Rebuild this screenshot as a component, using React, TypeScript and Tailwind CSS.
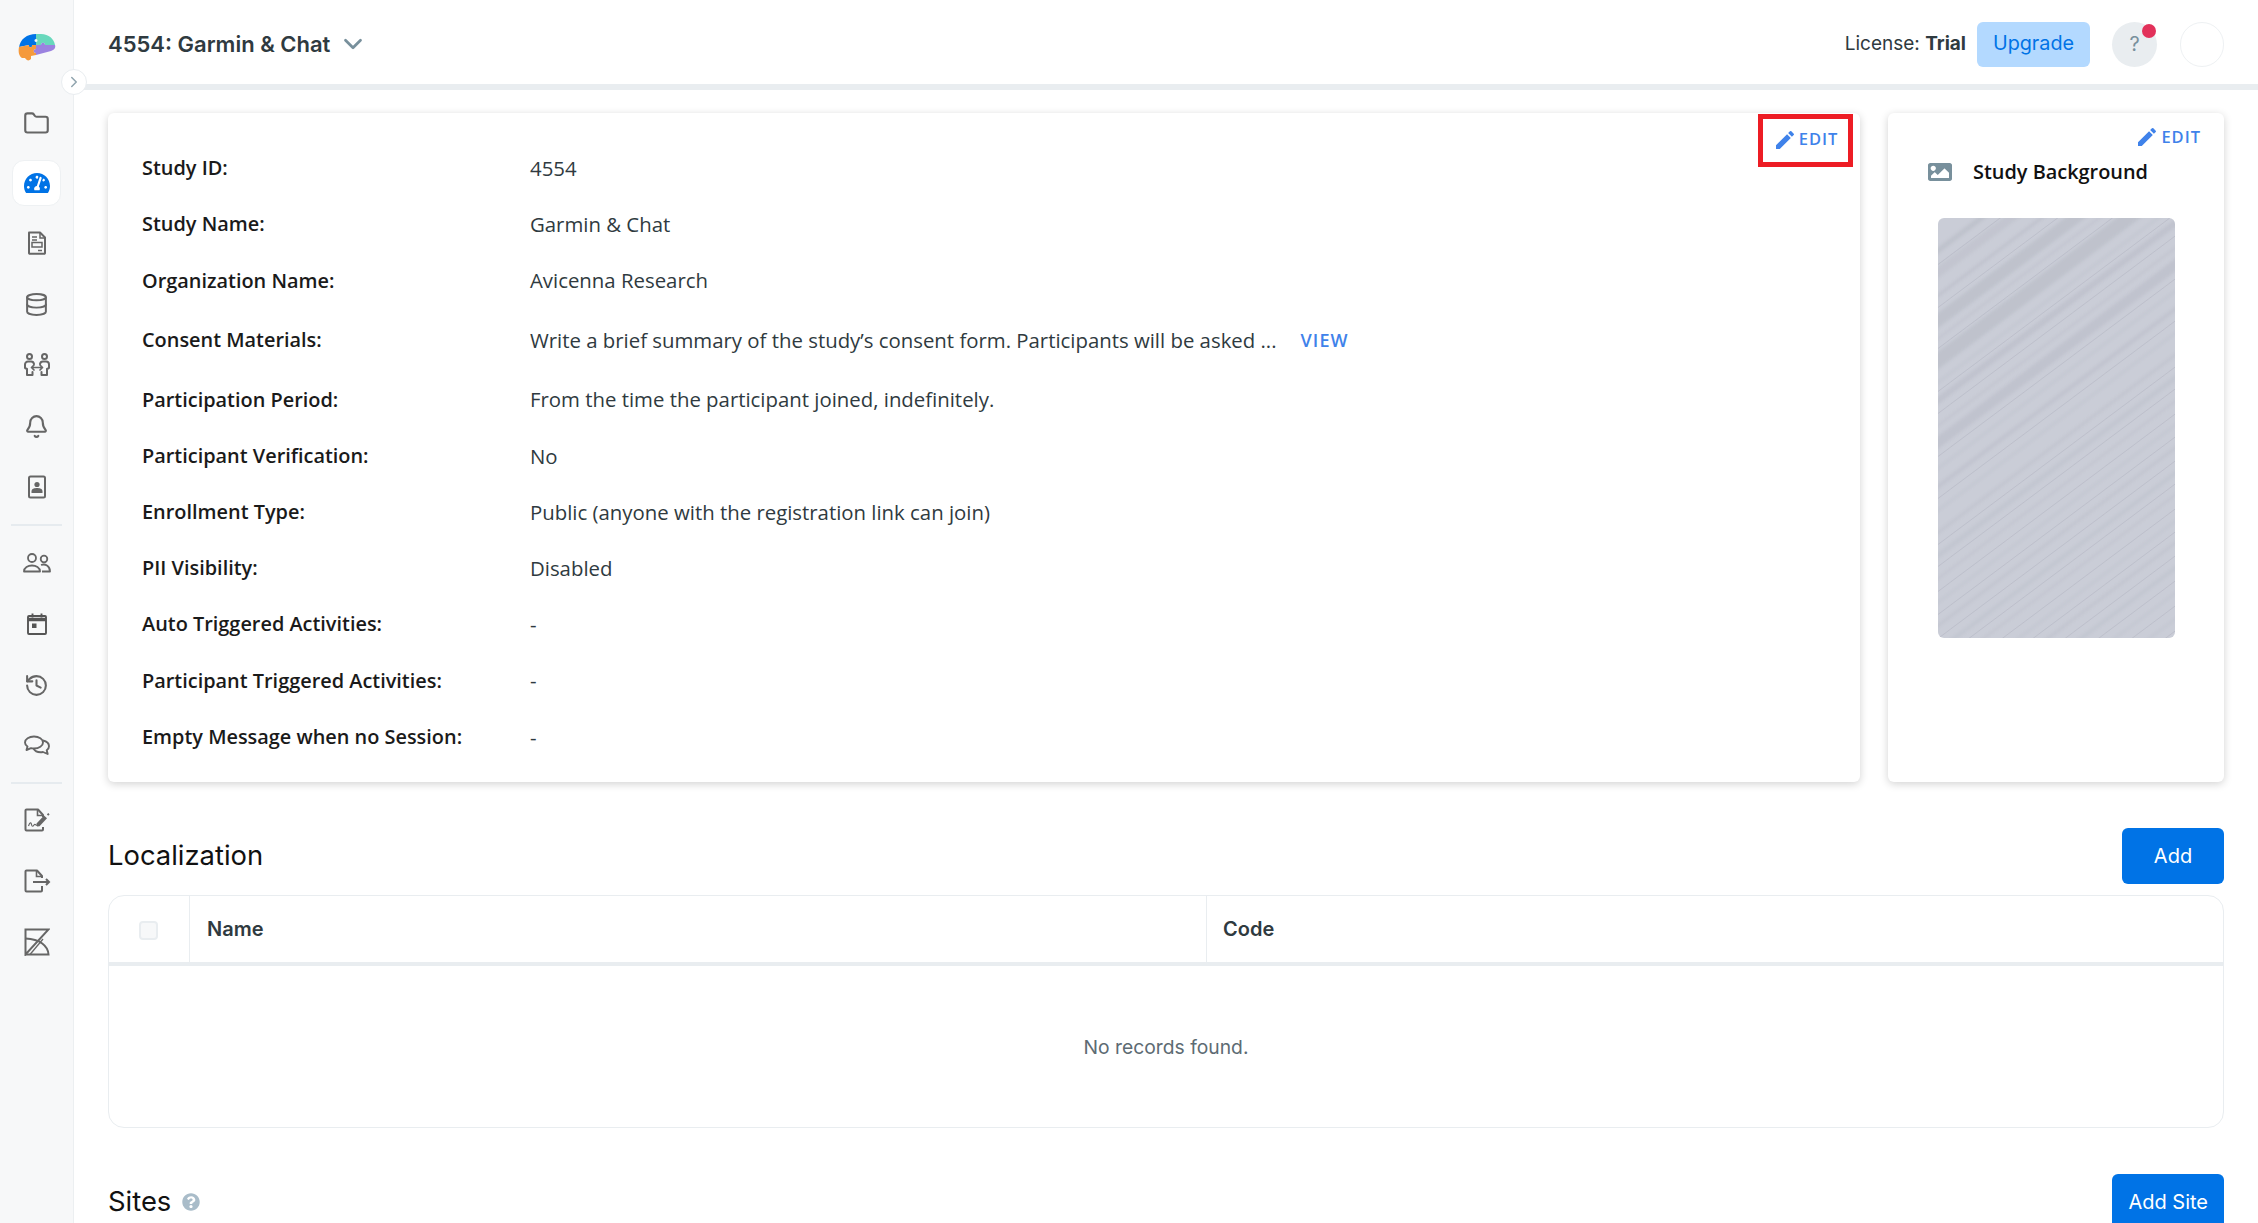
import React from "react";
import { Bell, ChevronDown, ChevronRight, Database, Folder, History } from "lucide-react";
import { FaImage, FaQuestionCircle, FaTachometerAlt } from "react-icons/fa";
import { MdEdit } from "react-icons/md";

const Logo = () => (
  <svg width="38" height="28" viewBox="0 0 38 28">
    <path d="M1 15 C2 6 9 1 18 1 L18 6 C16 6 16 9 18 9 L18 12 L14 12 C15 15 10 15 11 12 L1 14 Z" fill="#0073e6" />
    <path d="M18 1 L23 1 C31 1 36 6 37 12 L27 12 C27 9 23 9 23 12 L18 12 L18 9 C20 9 20 6 18 6 Z" fill="#68d8bc" />
    <path d="M1 14 L11 12 C10 15 15 15 14 12 L18 12 L18 16 C15 16 15 20 18 20 L18 22 L13 23 L13 26 C11 28 9 28 7 25 L4 25 C1 23 0 19 1 14 Z" fill="#f59a3c" />
    <path d="M18 12 L23 12 C23 9 27 9 27 12 L37 12 C38 15 36 17 33 18 L18 22 L18 20 C15 20 15 16 18 16 Z" fill="#9b82e0" />
  </svg>
);

const DocIcon = () => (
  <svg width="24" height="24" viewBox="0 0 24 24" fill="none" stroke="#666" strokeWidth="2">
    <path d="M4 1.500h11l5 5V22a.8.8 0 0 1-.8.8H4.800A.8.8 0 0 1 4 22V2.300a.8.8 0 0 1 .8-.8Z" strokeLinejoin="round" />
    <path d="M7 6h5M7 9h5M15 2v5h5" strokeWidth="1.500" />
    <rect x="7" y="11.500" width="10" height="4.500" strokeWidth="1.500" />
    <path d="M13 19.500h4" strokeWidth="1.500" />
  </svg>
);

const ExchangeIcon = () => (
  <svg width="28" height="24" viewBox="0 0 28 24" fill="none" stroke="#666" strokeWidth="2" strokeLinecap="round" strokeLinejoin="round">
    <circle cx="6.500" cy="3.500" r="2.500" />
    <circle cx="21.500" cy="3.500" r="2.500" />
    <path d="M6 22h3.500v-3M2 15v-3.500A3 3 0 0 1 5 8.500h3a3 3 0 0 1 3 2.500M2 15l2 1v6h2" />
    <path d="M22 22h-3.500v-3M26 15v-3.500a3 3 0 0 0-3-3h-3a3 3 0 0 0-3 2.500M26 15l-2 1v6h-2" />
    <path d="M8.500 14.500h11M11 12 8.500 14.500 11 17M17 12l2.500 2.500L17 17" strokeWidth="1.700" />
  </svg>
);

const ContactIcon = () => (
  <svg width="24" height="24" viewBox="0 0 24 24" fill="none" stroke="#666" strokeWidth="2">
    <rect x="4" y="1.500" width="16" height="21" rx="1.500" />
    <circle cx="12" cy="9.500" r="2.600" fill="#666" stroke="none" />
    <path d="M6.500 18v-1.500c0-3 3-3.500 5.500-3.500s5.500.5 5.500 3.500V18Z" fill="#666" stroke="none" />
  </svg>
);

const UsersIcon = () => (
  <svg width="30" height="24" viewBox="0 0 30 24" fill="none" stroke="#666" strokeWidth="1.800">
    <circle cx="10" cy="7" r="4" />
    <path d="M2 20.500c0-8 16-8 16 0Z" strokeLinejoin="round" />
    <circle cx="22" cy="8" r="3.300" />
    <path d="M19 14c4-1.500 9 .5 9 6.500h-8" strokeLinejoin="round" />
  </svg>
);

const CalendarIcon = () => (
  <svg width="24" height="24" viewBox="0 0 24 24" fill="none" stroke="#555" strokeWidth="1.900">
    <rect x="3" y="4" width="18" height="18" rx="1" />
    <path d="M3 7.500h18" strokeWidth="3.500" />
    <path d="M7.500 1.500v4M16.500 1.500v4" />
    <rect x="7" y="11.500" width="4.500" height="4.500" fill="#555" stroke="none" />
  </svg>
);

const ChatsIcon = () => (
  <svg width="28" height="24" viewBox="0 0 28 24" fill="none" stroke="#666" strokeWidth="1.900" strokeLinejoin="round">
    <path d="M11 2.500c5 0 9 2.500 9 6s-4 6-9 6c-1 0-2 0-3-.3L3.500 16l1-3.500C2.800 11.500 2 10 2 8.500c0-3.500 4-6 9-6Z" />
    <path d="M20 6.500c3.500.8 6 3 6 5.700 0 1.600-.8 3-2.300 4l1 3.800-4.700-2c-4 .6-8-.7-9.500-3.500" />
  </svg>
);

const FileSignIcon = () => (
  <svg width="28" height="24" viewBox="0 0 28 24" fill="none" stroke="#666" strokeWidth="2">
    <path d="M20 9V7l-5-5.500H3.500a1 1 0 0 0-1 1V21.500a1 1 0 0 0 1 1H19a1 1 0 0 0 1-1V19" strokeLinejoin="round" />
    <path d="M14.500 2v5.500H20" strokeWidth="1.600" />
    <path d="M5.500 18c1.500-4 2.500-4 3-1.500s1.500 2 2.500.5 1.500 0 3 .5" strokeWidth="1.200" />
    <path d="M14 18.500l-.5-3L21 7.500l3 2.800-7.500 8Z" fill="#666" stroke="none" />
    <path d="M24.500 7l1.500-1.200" strokeWidth="2" />
  </svg>
);

const FileExportIcon = () => (
  <svg width="28" height="24" viewBox="0 0 28 24" fill="none" stroke="#666" strokeWidth="2">
    <path d="M19 9V7l-5-5.500H3.500a1 1 0 0 0-1 1V21.500a1 1 0 0 0 1 1H18a1 1 0 0 0 1-1V17" strokeLinejoin="round" />
    <path d="M13.500 2v5.500H19" strokeWidth="1.600" />
    <path d="M10 13h16M23 10l3 3-3 3" />
  </svg>
);

const ChartIcon = () => (
  <svg width="26" height="28" viewBox="0 0 26 28" fill="none" stroke="#666" strokeWidth="2">
    <path d="M1.500 1.500h23L1.500 26.500Z" />
    <path d="M1.500 26.500h23C24 18 16 11 1.500 10.500" />
    <path d="M6 26.500 19 11" strokeWidth="1.300" />
  </svg>
);

const navClass = "h-12 flex items-center justify-center";
const rule = "h-0.5 mx-[11px] bg-[#e6ebef]";

const Sidebar = () => (
  <aside className="w-[74px] h-full shrink-0 bg-[#f7f8f9] border-r border-[#eceff1] pt-[33px] flex flex-col">
    <div className="h-7 flex justify-center"><Logo /></div>
    <div className="mt-[38px] flex flex-col gap-[13px]">
      <div className={`${navClass} text-[#666]`}><Folder size={27} strokeWidth={1.9} /></div>
      <div className="h-[46px] mx-3 bg-white rounded-xl border border-[#eef1f3] flex items-center justify-center">
        <FaTachometerAlt size={26} color="#0073e6" />
      </div>
      <div className={navClass}><DocIcon /></div>
      <div className={`${navClass} text-[#666]`}><Database size={25} strokeWidth={1.9} /></div>
      <div className={navClass}><ExchangeIcon /></div>
      <div className={`${navClass} text-[#666]`}><Bell size={25} strokeWidth={2} /></div>
      <div className={navClass}><ContactIcon /></div>
      <div className={rule} />
      <div className={navClass}><UsersIcon /></div>
      <div className={navClass}><CalendarIcon /></div>
      <div className={`${navClass} text-[#666]`}><History size={25} strokeWidth={2} /></div>
      <div className={navClass}><ChatsIcon /></div>
      <div className={`${rule} -my-px`} />
      <div className={navClass}><FileSignIcon /></div>
      <div className={navClass}><FileExportIcon /></div>
      <div className={navClass}><ChartIcon /></div>
    </div>
  </aside>
);

const Header = () => (
  <header className="h-[90px] shrink-0 border-b-[6px] border-[#e9edf0] pl-[34px] pr-[34px] pt-1 flex items-center justify-between font-['Inter',sans-serif]">
    <div className="flex items-center gap-2 text-[#2f3a40]">
      <span className="text-[22px] font-semibold">4554: Garmin &amp; Chat</span>
      <ChevronDown size={30} color="#78909c" strokeWidth={2.2} />
    </div>
    <div className="flex items-center">
      <span className="text-[19px] text-[#2f3a40]">License: <b className="font-bold">Trial</b></span>
      <button className="ml-[11px] h-[45px] w-[113px] rounded-md bg-[#b3d9ff] text-[#0073e6] text-[19.800px]">Upgrade</button>
      <div className="relative ml-[22px] w-[45px] h-[45px] rounded-full bg-[#e9edf0] text-[#78909c] text-[20px] flex items-center justify-center">
        ?
        <span className="absolute top-[2px] right-[1px] w-3.5 h-3.5 rounded-full bg-[#e2315a]" />
      </div>
      <div className="ml-[23px] w-[44px] h-[45px] rounded-full border border-[#eef1f3] bg-white" />
    </div>
  </header>
);

const EditLink = () => (
  <span className="flex items-center gap-1 text-[#3f82ea] text-[16.500px] font-semibold tracking-[0.06em] leading-none -mt-0.5">
    <MdEdit size={24} className="-mr-0.5" />
    EDIT
  </span>
);

const rows: { label: string; value: string; tall?: boolean }[] = [
  { label: "Study ID:", value: "4554" },
  { label: "Study Name:", value: "Garmin & Chat" },
  { label: "Organization Name:", value: "Avicenna Research" },
  { label: "Consent Materials:", value: "Write a brief summary of the study’s consent form. Participants will be asked ...", tall: true },
  { label: "Participation Period:", value: "From the time the participant joined, indefinitely." },
  { label: "Participant Verification:", value: "No" },
  { label: "Enrollment Type:", value: "Public (anyone with the registration link can join)" },
  { label: "PII Visibility:", value: "Disabled" },
  { label: "Auto Triggered Activities:", value: "-" },
  { label: "Participant Triggered Activities:", value: "-" },
  { label: "Empty Message when no Session:", value: "-" },
];

const DetailsCard = () => (
  <section className="flex-1 flex justify-between rounded-md bg-white shadow-[0_2px_8px_rgba(0,0,0,0.18)] pt-[27px] pb-[17px] pl-[34px] pr-[7px] font-['Open_Sans',sans-serif]">
    <div>
      {rows.map((row) => (
        <div key={row.label} className={`flex items-center ${row.tall ? "h-[63px]" : "h-[56.200px]"}`}>
          <span className="w-[388px] text-[19.900px] font-semibold text-[#1a1a1a]">{row.label}</span>
          <span className="text-[20.360px] text-[#2f3a40]">{row.value}</span>
          {row.tall && <span className="ml-6 text-[18px] font-semibold tracking-[0.06em] text-[#3f82ea]">VIEW</span>}
        </div>
      ))}
    </div>
    <div className="-mt-[26px] h-[53px] w-[95px] border-[5px] border-[#ed1c24] flex items-center justify-center">
      <EditLink />
    </div>
  </section>
);

const streaks = [
  [40, 0.09, 5], [62, 0.06, 9], [85, 0.08, 3], [110, 0.09, 12], [128, 0.06, 2], [150, 0.09, 14], [172, 0.05, 2],
  [190, 0.08, 6], [215, 0.06, 2], [232, 0.08, 10], [258, 0.05, 2], [276, 0.07, 4], [300, 0.05, 2], [322, 0.06, 3],
  [345, 0.05, 5], [368, 0.06, 2], [392, 0.05, 2], [415, 0.06, 3], [440, 0.05, 4], [462, 0.06, 2], [488, 0.05, 2],
  [510, 0.06, 3], [535, 0.05, 4], [560, 0.05, 2], [586, 0.05, 2], [610, 0.05, 3], [640, 0.05, 3],
];

// thin hairlines between the wider streaks
const hairlines = [54, 97, 138, 181, 203, 246, 288, 334, 356, 381, 404, 428, 451, 476, 499, 523, 548, 573, 598, 625];

const StudyImage = () => (
  <svg width="237" height="420" viewBox="0 0 237 420" className="mx-auto mt-[31px] rounded-md bg-[#cacdd7]">
    <g className="blur-[1.500px]">
      {streaks.map(([y, opacity, width]) => (
        <line key={y} x1="-10" y1={y} x2="300" y2={y - 232} stroke="#6f7380" strokeOpacity={opacity * 1.3} strokeWidth={width} />
      ))}
    </g>
    <g className="blur-[0.5px]">
      {hairlines.map((y) => (
        <line key={y} x1="-10" y1={y} x2="300" y2={y - 232} stroke="#7b7f8c" strokeOpacity={0.16} strokeWidth={1} />
      ))}
    </g>
  </svg>
);

const BackgroundCard = () => (
  <section className="w-[336px] shrink-0 rounded-md bg-white shadow-[0_2px_8px_rgba(0,0,0,0.18)] pt-[14px] font-['Open_Sans',sans-serif]">
    <div className="flex justify-end pr-[23px]"><EditLink /></div>
    <div className="mt-2 pl-10 flex items-center gap-[21px] text-[19.900px] font-semibold text-[#111]">
      <FaImage size={24} color="#78909c" />
      Study Background
    </div>
    <StudyImage />
  </section>
);

const SectionHead = ({ title, action, help }: { title: string; action: string; help?: boolean }) => (
  <div className="mt-[46px] flex items-center justify-between font-['Inter',sans-serif]">
    <h2 className="flex items-center gap-[11px] text-[27.400px] text-[#111]">
      {title}
      {help && <FaQuestionCircle size={18} color="#a9bcc9" />}
    </h2>
    <button className="h-14 min-w-[102px] px-4 rounded-md bg-[#0073e6] text-white text-[20px]">{action}</button>
  </div>
);

const LocalizationTable = () => (
  <div className="mt-[11px] h-[233px] rounded-2xl border border-[#e9edf0] font-['Inter',sans-serif] text-[#2f3a40]">
    <div className="h-[70px] flex border-b-4 border-[#e9edf0] text-[20px] font-semibold">
      <div className="w-[81px] flex items-center justify-center border-r border-[#e9edf0]">
        <span className="w-[19px] h-[19px] mt-1 -ml-0.5 rounded-[4px] border-2 border-[#e9edf0] bg-[#f7f8f9]" />
      </div>
      <div className="w-[1017px] pl-[17px] flex items-center border-r border-[#e9edf0]">Name</div>
      <div className="flex-1 pl-4 flex items-center">Code</div>
    </div>
    <div className="h-[159px] pt-[5px] flex items-center justify-center text-[19.300px] text-[#5d6b73]">No records found.</div>
  </div>
);

export default function App() {
  return (
    <div className="relative flex h-screen overflow-hidden bg-white">
      <Sidebar />
      <div className="flex-1 min-w-0 flex flex-col">
        <Header />
        <main className="px-[34px] pt-[23px]">
          <div className="flex gap-7">
            <DetailsCard />
            <BackgroundCard />
          </div>
          <SectionHead title="Localization" action="Add" />
          <LocalizationTable />
          <SectionHead title="Sites" action="Add Site" help />
        </main>
      </div>
      <button className="absolute left-[61px] top-[69px] w-[26px] h-[26px] rounded-full bg-white border border-[#e9edf0] flex items-center justify-center">
        <ChevronRight size={18} color="#90a4ae" />
      </button>
    </div>
  );
}
